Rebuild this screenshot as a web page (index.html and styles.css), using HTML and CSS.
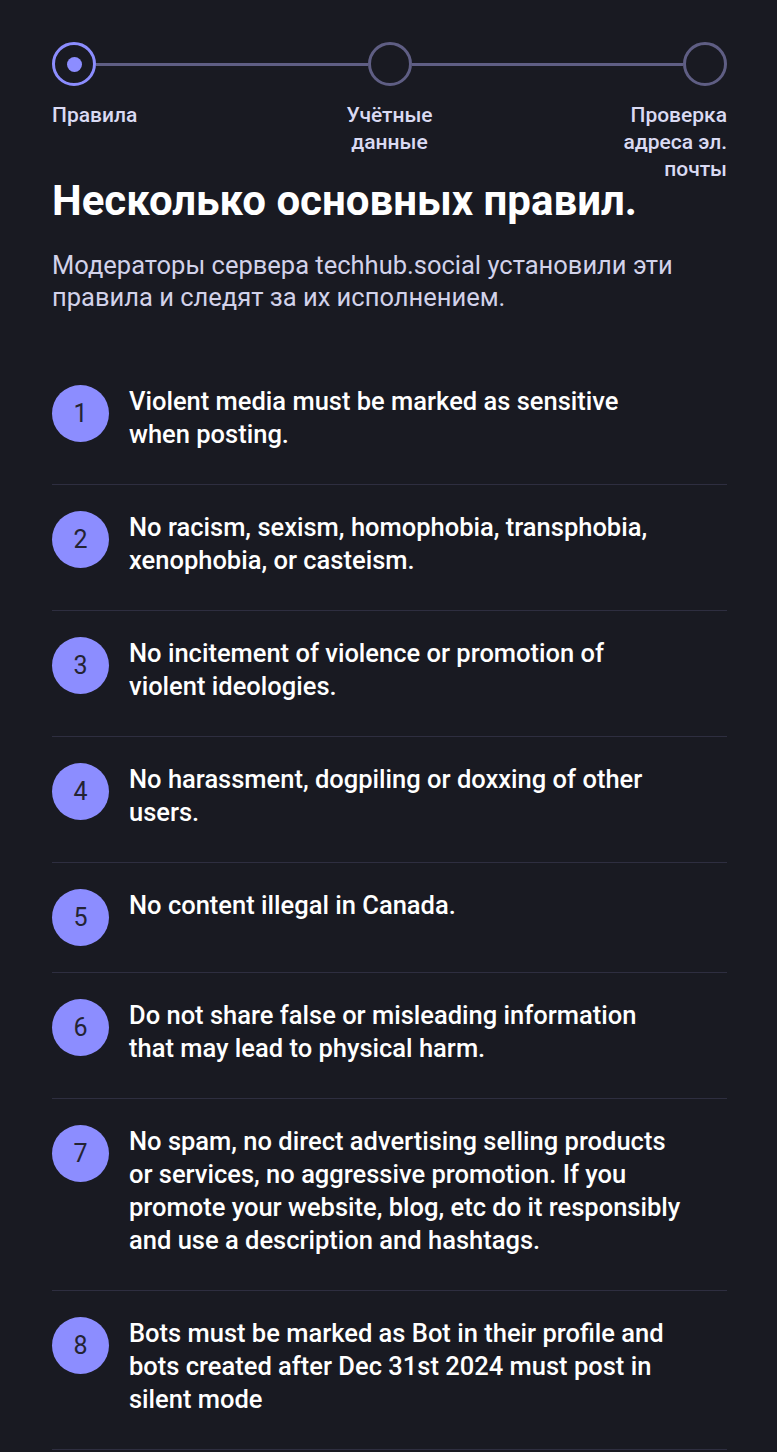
FILE: index.html
```html
<!DOCTYPE html>
<html lang="ru">
<head>
<meta charset="utf-8">
<title>Правила</title>
<link rel="stylesheet" href="styles.css">
</head>
<body>
<div class="page">
  <div class="progress">
    <div class="track">
      <div class="circle circle--active"><span class="dot"></span></div>
      <div class="line"></div>
      <div class="circle"></div>
      <div class="line"></div>
      <div class="circle"></div>
    </div>
    <div class="labels">
      <div class="label label--left">Правила</div>
      <div class="label label--center">Учётные данные</div>
      <div class="label label--right">Проверка адреса эл. почты</div>
    </div>
  </div>

  <h1 class="title">Несколько основных правил.</h1>
  <p class="lead">Модераторы сервера techhub.social установили эти правила и следят за их исполнением.</p>

  <ol class="rules">
    <li class="rule"><span class="num">1</span><div class="body"><div class="text">Violent media must be marked as sensitive when posting.</div></div></li>
    <li class="rule"><span class="num">2</span><div class="body"><div class="text">No racism, sexism, homophobia, transphobia, xenophobia, or casteism.</div></div></li>
    <li class="rule"><span class="num">3</span><div class="body"><div class="text">No incitement of violence or promotion of violent ideologies.</div></div></li>
    <li class="rule"><span class="num">4</span><div class="body"><div class="text">No harassment, dogpiling or doxxing of other users.</div></div></li>
    <li class="rule"><span class="num">5</span><div class="body"><div class="text">No content illegal in Canada.</div></div></li>
    <li class="rule"><span class="num">6</span><div class="body"><div class="text">Do not share false or misleading information that may lead to physical harm.</div></div></li>
    <li class="rule"><span class="num">7</span><div class="body"><div class="text">No spam, no direct advertising selling products or services, no aggressive promotion. If you promote your website, blog, etc do it responsibly and use a description and hashtags.</div></div></li>
    <li class="rule"><span class="num">8</span><div class="body"><div class="text">Bots must be marked as Bot in their profile and bots created after Dec 31st 2024 must post in silent mode</div></div></li>
  </ol>
</div>
</body>
</html>
```

FILE: styles.css
```css
* { box-sizing: border-box; }

html, body {
  margin: 0;
  padding: 0;
  background: #191a22;
}

body {
  font-family: Roboto, "Noto Sans", sans-serif;
  color: #ffffff;
}

.page {
  padding: 42px 50px 0 52px;
}

.track {
  display: flex;
  align-items: center;
}

.circle {
  width: 44px;
  height: 44px;
  border-radius: 50%;
  border: 3px solid #5f5e84;
  flex: none;
  display: flex;
  align-items: center;
  justify-content: center;
}

.circle--active {
  border-color: #8c8dff;
}

.dot {
  width: 15px;
  height: 15px;
  border-radius: 50%;
  background: #8c8dff;
}

.line {
  flex: 1;
  height: 3px;
  background: #5f5e84;
}

.labels {
  display: flex;
  justify-content: space-between;
  margin-top: 16px;
}

.label {
  width: 112px;
  font-size: 21px;
  font-weight: 500;
  line-height: 27px;
  color: #dadaf3;
}

.label--left { text-align: left; }
.label--center { text-align: center; }
.label--right { text-align: right; }

.title {
  margin: -3px 0 0;
  font-size: 42px;
  line-height: 42px;
  font-weight: 700;
  color: #ffffff;
}

.lead {
  margin: 27px 0 0;
  font-size: 25.5px;
  line-height: 32px;
  color: #d2d2ea;
}

.rules {
  list-style: none;
  margin: 46px 0 0;
  padding: 0;
}

.rule {
  display: flex;
  align-items: flex-start;
  gap: 20px;
  padding: 26px 0;
  border-bottom: 1px solid #2e2e40;
}

.num {
  flex: none;
  width: 57px;
  height: 57px;
  border-radius: 50%;
  background: #8c8dff;
  color: #242433;
  font-size: 25px;
  display: flex;
  align-items: center;
  justify-content: center;
}

.body {
  padding-bottom: 7px;
  max-width: 556px;
}

.text {
  font-size: 25.5px;
  line-height: 33px;
  font-weight: 500;
}
```
